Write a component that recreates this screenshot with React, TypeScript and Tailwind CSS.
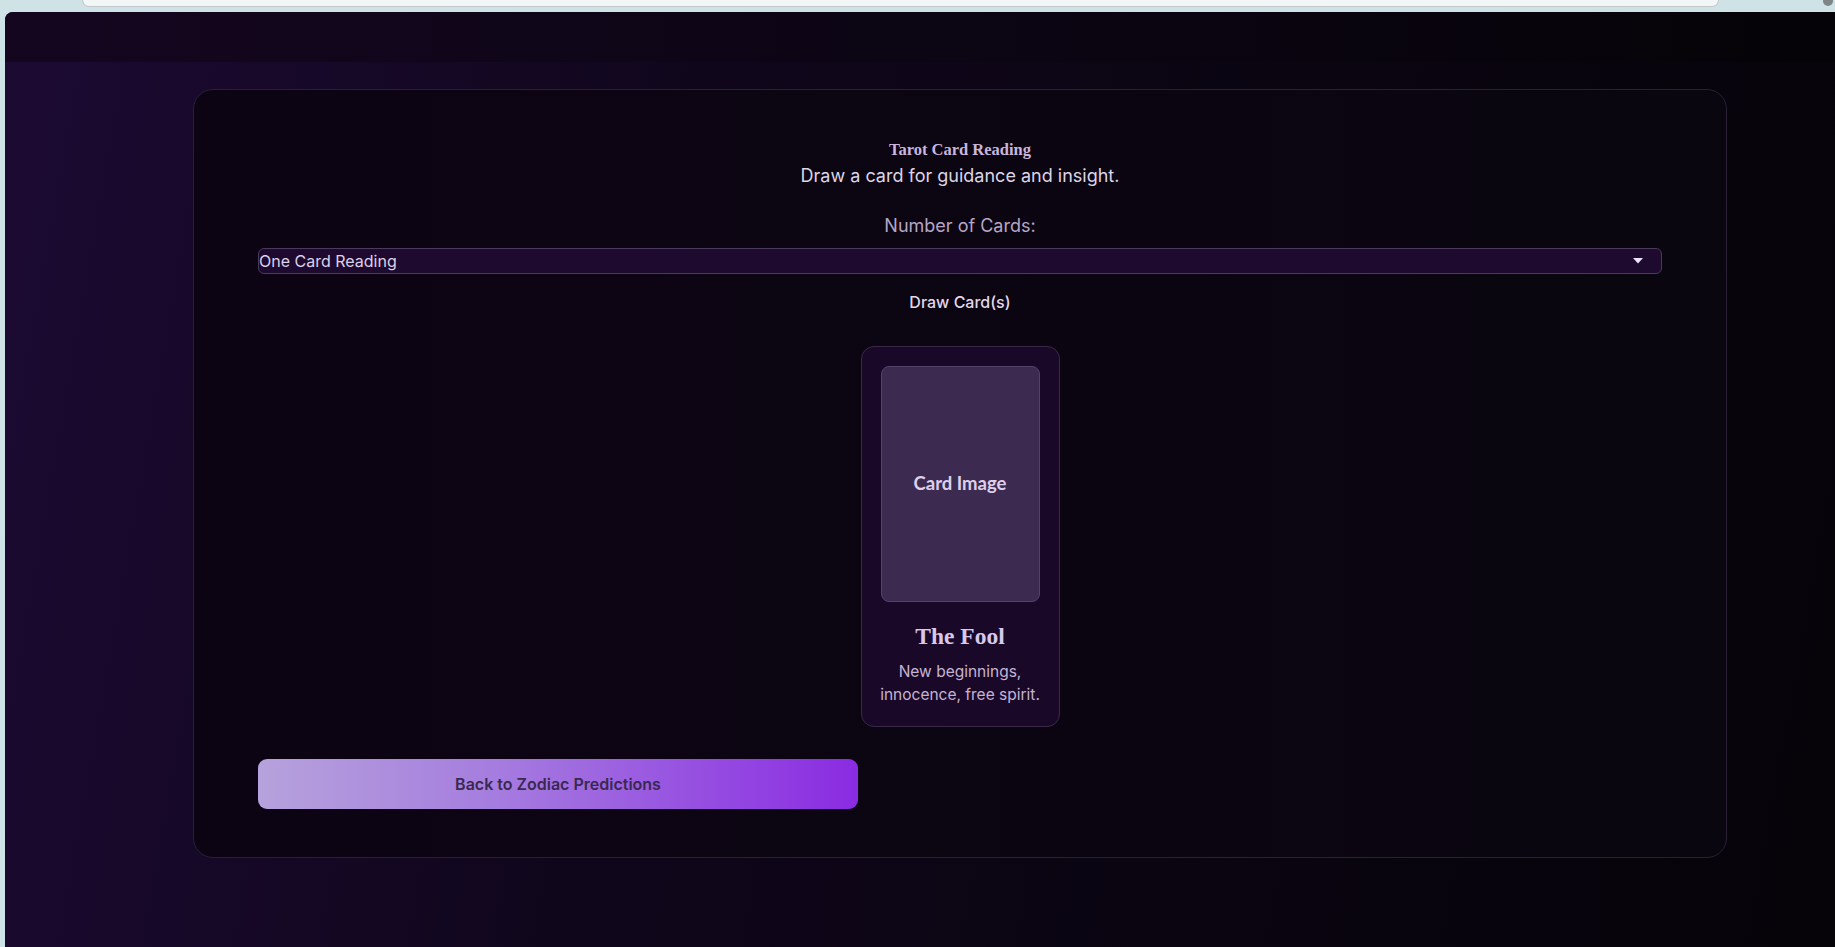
export default function App() {
  return (
    <div className="relative w-[1835px] h-[947px] overflow-hidden bg-[#cfe3e6] font-['Inter','Noto_Sans',sans-serif]">
      {/* browser-ish strip */}
      <div className="h-[12px] pl-[82px]">
        <div className="w-[1637px] h-[7px] rounded-b-[8px] bg-[#f2f6f7] border-b border-x border-[#c3c8cb]" />
      </div>
      <div className="absolute top-[-4px] right-[2px] w-[10px] h-[10px] rounded-full bg-[#7d8587]" />

      {/* app */}
      <div className="ml-[5px] h-[935px] rounded-tl-[8px] overflow-hidden flex flex-col bg-[linear-gradient(100deg,#1c0a33_0%,#10061c_35%,#0a0511_65%,#060309_100%)]">
        <div className="h-[50px] shrink-0 bg-[linear-gradient(90deg,#14061f_0%,#0c0514_50%,#050307_100%)]" />
        <div className="flex-1 pt-[27px] pl-[188px]">
          <div className="w-[1534px] rounded-[20px] border border-[#2a2036] bg-[linear-gradient(90deg,#0d0413_0%,#0b0511_60%,#09060f_100%)] px-16 pt-[48px] pb-[48px] flex flex-col items-center">
            <h2 className="font-['Liberation_Serif',serif] font-bold text-[16.5px] leading-[24px] text-[#c9b5dc]">
              Tarot Card Reading
            </h2>
            <p className="text-[18px] leading-[27px] text-[#ddd5e6]">
              Draw a card for guidance and insight.
            </p>
            <div className="mt-[23px] text-[18px] leading-[27px] text-[#b6a6c6]">
              Number of Cards:
            </div>
            <div className="mt-[9px] w-full h-[26px] rounded-[6px] border border-[#4a3a5b] bg-[#1e0a2e] flex items-center justify-between pr-[18px]">
              <span className="text-[16px] leading-[20px] text-[#ddd0ea]">One Card Reading</span>
              <svg width="10" height="6" viewBox="0 0 10 6">
                <path d="M0 0 L10 0 L5 5.5 Z" fill="#efe2ff" />
              </svg>
            </div>
            <button className="mt-[16px] text-[16px] font-medium leading-[24px] text-[#e2d8ec] bg-transparent">
              Draw Card(s)
            </button>

            <div className="mt-[32px] w-[199px] rounded-[13px] border border-[#3a2849] bg-[#1a0828] px-[19px] pt-[19px] pb-[20px] flex flex-col items-center">
              <div className="w-[159px] h-[236px] rounded-[8px] border border-[#54426a] bg-[#3d2a51] flex items-center justify-center">
                <span className="font-['Lato',sans-serif] font-bold text-[18.5px] text-[#ddd0ea]">Card Image</span>
              </div>
              <h3 className="mt-[18px] font-['Liberation_Serif',serif] font-bold text-[23.5px] leading-[32px] text-[#d8c8ec]">
                The Fool
              </h3>
              <p className="mt-[8px] text-center whitespace-nowrap text-[15.5px] leading-[23px] text-[#c4b4d4]">
                New beginnings,
                <br />
                innocence, free spirit.
              </p>
            </div>

            <button className="self-start mt-[32px] w-[600px] h-[50px] rounded-[9px] bg-[linear-gradient(90deg,#b6a2dc_0%,#a57cdf_40%,#8a2be2_100%)] flex items-center justify-center">
              <span className="text-[16px] font-semibold text-[#3a2852]">Back to Zodiac Predictions</span>
            </button>
          </div>
        </div>
      </div>
    </div>
  );
}
